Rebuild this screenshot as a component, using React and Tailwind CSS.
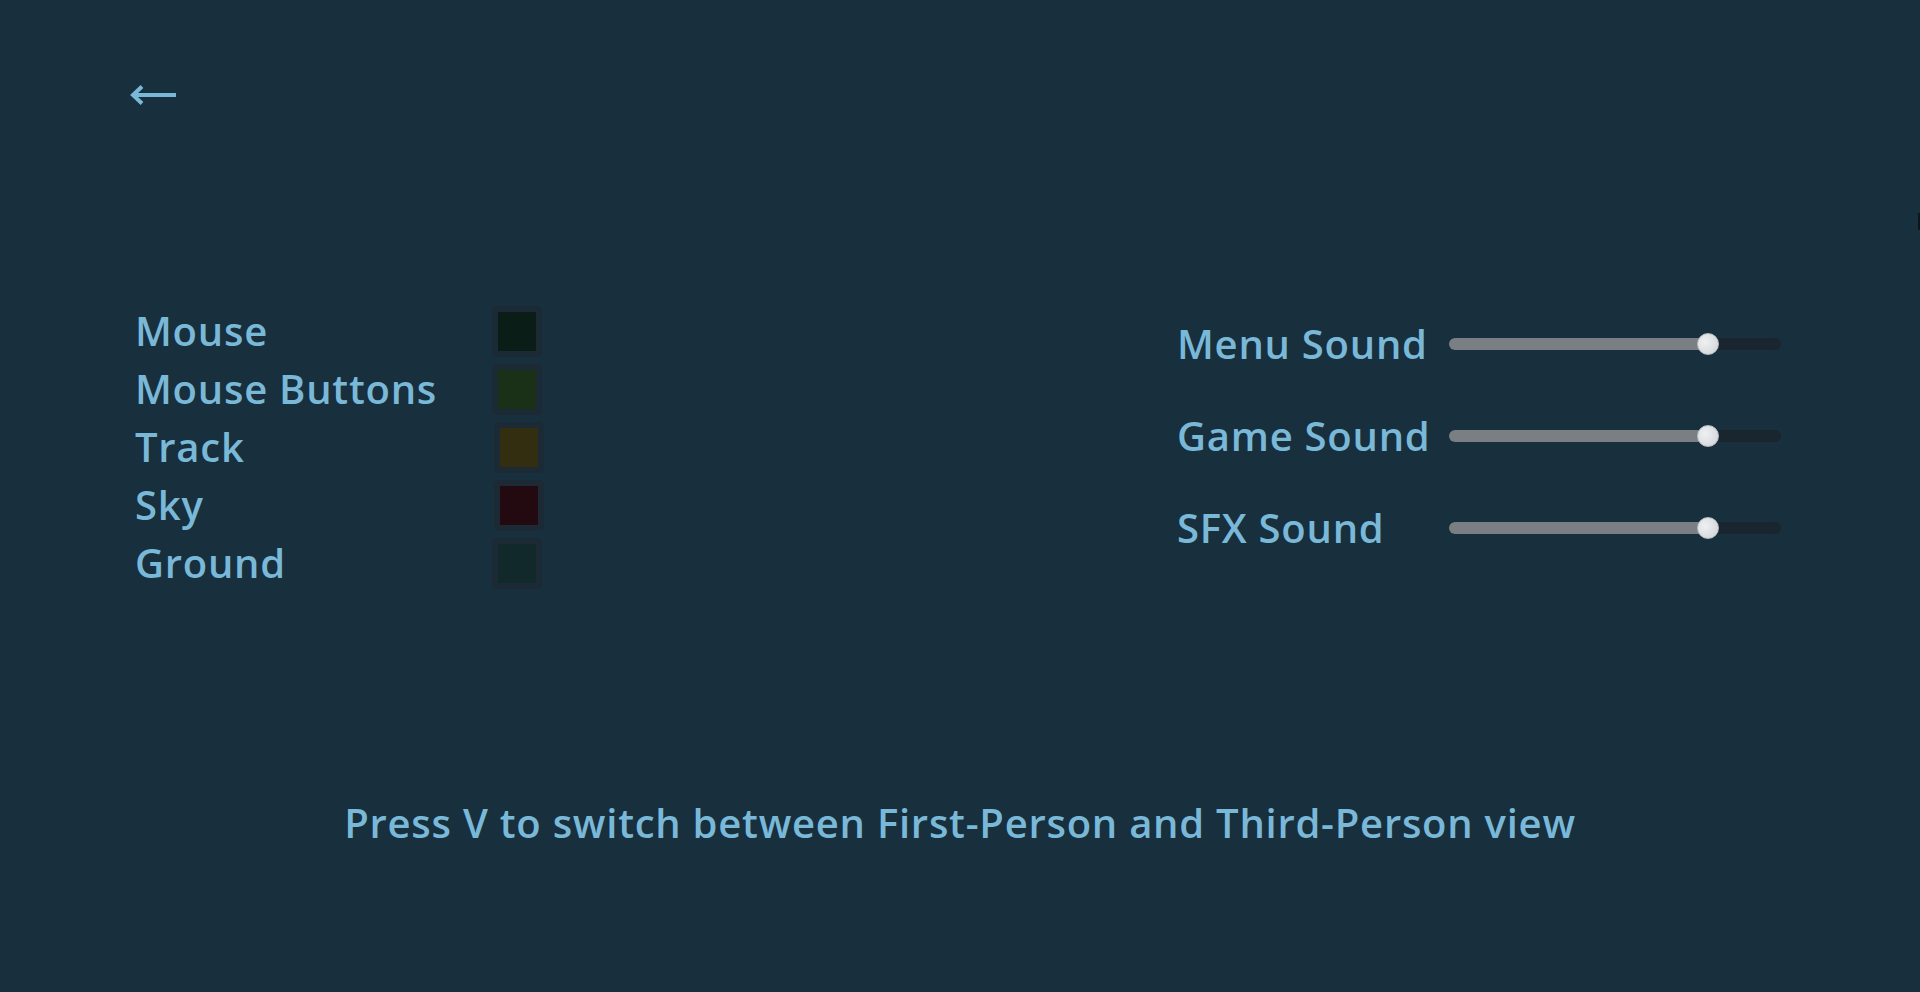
import React from "react";

const colors = [
  {label: "Mouse", fill: "bg-[#0a1d17]", shift: ""},
  {label: "Mouse Buttons", fill: "bg-[#1a3118]", shift: ""},
  {label: "Track", fill: "bg-[#332e10]", shift: "ml-[2px]"},
  {label: "Sky", fill: "bg-[#230a10]", shift: "ml-[2px]"},
  {label: "Ground", fill: "bg-[#11292a]", shift: ""},
];

const sounds = [
  {label: "Menu Sound", value: 80},
  {label: "Game Sound", value: 80},
  {label: "SFX Sound", value: 80},
];

function Slider({value}){
  // thumb travels inside the track, so keep it 11px from each end
  const left = 11 + (310 * value) / 100;
  return (
    <div className="relative h-[12px] w-[332px] rounded-full bg-[#19252f]">
      <div className="h-full rounded-full bg-[#7a7f84]" style={{width: left}} />
      <div
        className="absolute top-1/2 h-[22px] w-[22px] -translate-x-1/2 -translate-y-1/2 rounded-full border border-[#b9bdc1] bg-[radial-gradient(circle_at_35%_40%,#eef0f2,#cfd3d6)]"
        style={{left}}
      />
    </div>
  );
}

export default function App(){
  return (
    <div className="relative flex h-[992px] w-full flex-col overflow-hidden bg-[#182f3e] text-[#7ab8d8] font-['Open_Sans',sans-serif] font-semibold tracking-[0.75px]">
      <div className="pl-[130px] pt-[85px]">
        <button className="block">
          <svg width="46" height="20" viewBox="0 0 46 20" fill="none" stroke="#7ab8d8" strokeWidth="4" strokeLinecap="butt" strokeLinejoin="miter">
            <path d="M3 10 H46" />
            <path d="M12 1.5 L3 10 L12 18.5" />
          </svg>
        </button>
      </div>

      <div className="mt-[197px] flex items-start">
        <div className="ml-[135px] w-[1042px]">
          <div className="grid grid-cols-[357px_auto] text-[40px] leading-[58px]">
            {colors.map((c)=>(
              <React.Fragment key={c.label}>
                <div>{c.label}</div>
                <div className="flex items-center">
                  <div className={"h-[51px] w-[50px] rounded-[5px] border-[6px] border-[#1b2a34] " + c.fill + " " + c.shift} />
                </div>
              </React.Fragment>
            ))}
          </div>
        </div>

        <div className="-mt-[4px] flex flex-col">
          {sounds.map((s)=>(
            <div key={s.label} className="flex h-[92px] items-center text-[40px] leading-[58px]">
              <div className="w-[272px]">{s.label}</div>
              <Slider value={s.value} />
            </div>
          ))}
        </div>
      </div>

      <div className="mt-auto pb-[140px] text-center text-[40px] leading-[58px]">
        Press V to switch between First-Person and Third-Person view
      </div>

      <div className="absolute right-0 top-[213px] h-[17px] w-[2px] bg-[#0b161d]" />
    </div>
  );
}
